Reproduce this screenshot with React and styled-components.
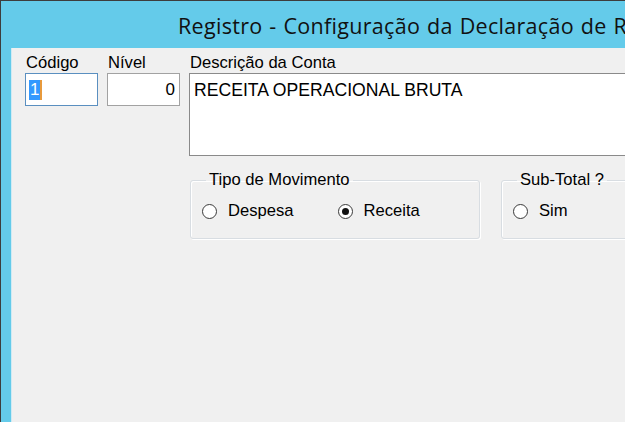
import React from "react";
import styled, { createGlobalStyle } from "styled-components";

const Global = createGlobalStyle`
  html, body { margin: 0; padding: 0; background: #ffffff; }
  body { font-family: "Liberation Sans", Arial, sans-serif; }
`;

const Window = styled.div`
  width: 625px;
  height: 422px;
  box-sizing: border-box;
  border-top: 1px solid #3d3d3d;
  border-left: 1px solid #3d3d3d;
  background: #64cbea;
  display: flex;
  flex-direction: column;
  overflow: hidden;
`;

const TitleBar = styled.div`
  height: 47px;
  flex: none;
  display: flex;
  align-items: center;
  padding-left: 177px;
  font-family: "Open Sans", "Noto Sans", sans-serif;
  font-size: 21.5px;
  letter-spacing: 0.3px;
  word-spacing: 1px;
  color: #111;
  white-space: nowrap;
  overflow: hidden;
  padding-top: 1px;
  box-sizing: border-box;
`;

const Body = styled.div`
  flex: 1;
  margin-left: 10px;
  border-left: 1px solid #cfeaf4;
  background: #f0f0f0;
  padding: 5px 0 0 13px;
  display: flex;
  gap: 9px;
  font-size: 16.6px;
  color: #000;
  min-width: 0;
`;

const Column = styled.div`
  display: flex;
  flex-direction: column;
  width: ${(p) => (p.$w ? `${p.$w}px` : "auto")};
  flex: ${(p) => (p.$w ? "none" : "1")};
  min-width: 0;
`;

const Label = styled.div`
  height: 20px;
  line-height: 20px;
  padding-left: 1px;
  white-space: nowrap;
`;

const TextBox = styled.div`
  height: 33px;
  box-sizing: border-box;
  background: #fff;
  border: 1px solid ${(p) => (p.$focused ? "#5a8fc0" : "#a2a2a2")};
  display: flex;
  align-items: center;
  justify-content: ${(p) => (p.$right ? "flex-end" : "flex-start")};
  padding: 0 4px 0 3px;
  font-size: 17px;
`;

const Selected = styled.span`
  background: #3399ff;
  color: #fff;
  padding: 0 1px;
  line-height: 20px;
`;

const Caret = styled.span`
  display: inline-block;
  width: 2px;
  height: 20px;
  background: #e89a3c;
`;

const Memo = styled.div`
  height: 83px;
  margin-right: -20px;
  box-sizing: border-box;
  background: #fff;
  border: 1px solid #8a8a8a;
  border-right: none;
  padding: 6px 4px;
  font-size: 17.6px;
  white-space: nowrap;
`;

const GroupRow = styled.div`
  display: flex;
  gap: 21px;
  margin-top: 15px;
  padding-left: 1px;
`;

const Group = styled.fieldset`
  margin: 0;
  padding: 11px 0 0 11px;
  width: ${(p) => p.$w}px;
  flex: none;
  height: 68px;
  box-sizing: border-box;
  border: 1px solid #d8dde2;
  border-radius: 3px;
  box-shadow: inset 1px 1px 0 #fff, 1px 1px 0 #fff;
  display: flex;
  align-items: flex-start;
  gap: ${(p) => p.$gap || 0}px;
`;

const Legend = styled.legend`
  padding: 0 3px;
  margin-left: 4px;
  line-height: 18px;
  font-size: 16.6px;
`;

const RadioItem = styled.label`
  display: flex;
  align-items: center;
  gap: 11px;
  height: 22px;
`;

const RadioCircle = styled.span`
  width: 15px;
  height: 15px;
  box-sizing: border-box;
  border-radius: 50%;
  border: 1px solid #3a3a3a;
  background: #fff;
  display: flex;
  align-items: center;
  justify-content: center;
  &::after {
    content: "";
    display: ${(p) => (p.$checked ? "block" : "none")};
    width: 7px;
    height: 7px;
    border-radius: 50%;
    background: #111;
  }
`;

function Radio({ checked, children }) {
  return (
    <RadioItem>
      <RadioCircle $checked={checked} />
      <span>{children}</span>
    </RadioItem>
  );
}

export default function App() {
  return (
    <>
      <Global />
      <Window>
        <TitleBar>Registro - Configuração da Declaração de Resultado</TitleBar>
        <Body>
          <Column $w={73}>
            <Label>Código</Label>
            <TextBox $focused>
              <Selected>1</Selected>
              <Caret />
            </TextBox>
          </Column>
          <Column $w={73}>
            <Label>Nível</Label>
            <TextBox $right>0</TextBox>
          </Column>
          <Column>
            <Label>Descrição da Conta</Label>
            <Memo>RECEITA OPERACIONAL BRUTA</Memo>
            <GroupRow>
              <Group $w={290} $gap={44}>
                <Legend>Tipo de Movimento</Legend>
                <Radio>Despesa</Radio>
                <Radio checked>Receita</Radio>
              </Group>
              <Group $w={220}>
                <Legend>Sub-Total ?</Legend>
                <Radio>Sim</Radio>
              </Group>
            </GroupRow>
          </Column>
        </Body>
      </Window>
    </>
  );
}
